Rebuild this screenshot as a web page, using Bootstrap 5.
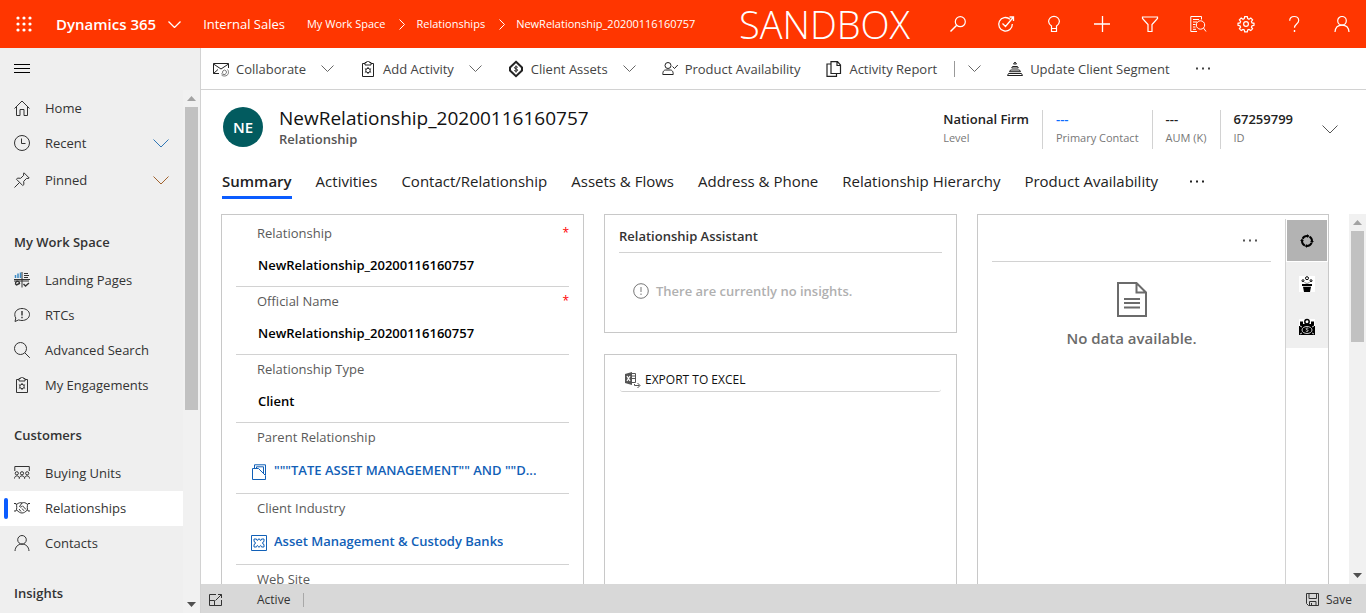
<!DOCTYPE html>
<html lang="en">
<head>
<meta charset="utf-8">
<meta name="viewport" content="width=device-width, initial-scale=1">
<title>NewRelationship_20200116160757 - Dynamics 365</title>
<link href="https://cdn.jsdelivr.net/npm/bootstrap@5.3.0/dist/css/bootstrap.min.css" rel="stylesheet">
<style>
  body { font-family: "Open Sans", "Noto Sans", sans-serif; font-size: 13px; line-height: 20px; color: #333; background: #fff; }
  button { background: none; border: 0; padding: 0; color: inherit; font: inherit; }
  a { color: inherit; text-decoration: none; }
  svg { display: block; flex: none; fill: none; overflow: visible; }
  svg:not([stroke]) { stroke: currentColor; }
  .i16 { width: 16px; height: 16px; }
  .chev { width: 13px; height: 7px; }
  .chev-lg { width: 16px; height: 9px; }

  /* top bar */
  .topbar { height: 48px; background: #ff3600; color: #fff; }
  .waffle { width: 48px; height: 48px; }
  .product { font-size: 15px; font-weight: 600; margin-left: 8px; gap: 12px; }
  .area { margin-left: 22px; }
  .crumbs { font-size: 11px; margin-left: 22px; }
  .crumbs .sep { padding: 0 11px 0 14px; }
  .env { font-size: 38px; line-height: 46px; font-weight: 300; }
  .topicon { width: 48px; height: 48px; }

  /* site map */
  .sitemap { width: 201px; background: #efefef; border-right: 1px solid #d2d2d2; }
  .burger { height: 42px; padding-left: 14px; }
  .map-items { width: 183px; padding-top: 1px; }
  .map-items a, .map-items .twisty { height: 35px; padding-left: 14px; gap: 15px; color: #333; width: 100%; }
  .map-items .twisty { padding-right: 14px; }
  .map-items .twisty + .twisty { margin-top: 2px; }
  .map-items a.current { background: #fff; position: relative; }
  .map-items a.current::before { content: ""; position: absolute; left: 4px; top: 7px; width: 4px; height: 21px; border-radius: 2px; background: #0b5cff; }
  .map-head { font-size: 13px; font-weight: 600; line-height: 20px; padding: 12px 0 11px 14px; margin: 10px 0 0; }
  .map-head.first { margin-top: 22px; }
  .tint-blue { color: #2f76b5; }
  .tint-brown { color: #a0622d; }
  .track { width: 17px; background: #f1f1f1; }
  .track svg { fill: #505050; stroke: none; width: 9px; height: 5px; }
  .track svg.dim { fill: #a3a3a3; }
  .thumb { width: 13px; background: #c1c1c1; }
  .arrow { height: 17px; }

  /* command bar */
  .commands { height: 42px; border-bottom: 1px solid #d2d2d2; padding-left: 12px; gap: 26px; color: #444; }
  .cmd { gap: 7px; }
  .cmd .chev { margin-left: 8px; color: #666; }
  .cmd .ico { color: #222; }
  .split { width: 1px; height: 16px; background: #999; margin: 0 5px 0 17px; }

  /* record header */
  .rec-head { padding: 17px 28px 0 22px; }
  .avatar { width: 40px; height: 40px; background: #025b5f; color: #fff; font-size: 15px; font-weight: 600; }
  .rec-title { font-size: 19px; line-height: 22px; font-weight: 500; color: #111; margin: 0; }
  .rec-sub { font-weight: 600; color: #555; }
  .rec-facts { padding-top: 2px; }
  .metric { padding: 0 13px; height: 39px; border-left: 1px solid #d2d2d2; }
  .metric:first-child { border-left: 0; }
  .metric dt { font-size: 11px; line-height: 19px; font-weight: 400; color: #777; }
  .metric dd { font-weight: 600; line-height: 18px; color: #222; margin: 0; }
  .metric dd a { color: #0b6cff; }
  .expand { color: #555; }
  .tabs { font-size: 15px; padding: 17px 0 0 21px; gap: 24px; color: #222; }
  .tabs a { height: 33px; padding-top: 5px; border-bottom: 3px solid transparent; white-space: nowrap; }
  .tabs a.current { font-weight: 600; border-bottom-color: #0b5cff; }
  .tabs button { margin: 14px 0 0 8px; }

  /* form body */
  .form-body { padding-top: 15px; }
  .form-grid { display: grid; grid-template-columns: 363fr 353fr 352fr; gap: 20px; padding: 0 20px; }
  .panel { border: 1px solid #c8c8c8; background: #fff; }
  .panel + .panel { margin-top: 21px; }
  .fields { padding: 4px 14px 0; }
  .field { border-bottom: 1px solid #d2d2d2; }
  .field label, .field .caption { display: block; padding: 4px 0 5px 21px; color: #5a5a5a; }
  .field .req { color: #f00; font-size: 12px; line-height: 12px; padding-top: 8px; }
  .field input, .field select { display: block; appearance: none; border: 0; outline: 0; background: none; width: 100%; height: 34px; padding: 0 0 0 22px; margin-bottom: 4px; font: inherit; font-weight: 600; color: #000; }
  .lookup { height: 36px; margin-bottom: 5px; padding: 0 14px 0 15px; gap: 7px; color: #1160b7; font-weight: 600; }
  .insight { padding: 11px 14px; height: 119px; }
  .panel-title { font-size: 13px; font-weight: 600; line-height: 20px; margin: 0; padding: 0 0 6px; border-bottom: 1px solid #d2d2d2; }
  .quiet { padding: 28px 0 0 14px; gap: 7px; color: #b0b0b0; font-weight: 600; }
  .export { font-size: 12px; color: #111; margin: 10px 15px 0; padding: 5px 0 1px 5px; border-bottom: 1px solid #d2d2d2; border-radius: 3px; }
  .export button { gap: 4px; }
  .empty-top { height: 47px; margin: 0 14px; border-bottom: 1px solid #d2d2d2; padding: 4px 14px 0 0; color: #555; }
  .empty { font-size: 15px; font-weight: 600; color: #6b6b6b; padding-top: 20px; gap: 11px; }
  .rail { width: 43px; margin-top: 4px; border-left: 1px solid #d2d2d2; }
  .rail button { height: 43px; background: #efefef; color: #000; }
  .rail button.current { background: #b3b3b3; height: 41px; margin: 1px; }

  /* status bar */
  .status { height: 29px; background: #d8d8d8; font-size: 12px; padding: 2px 14px 0 8px; color: #333; }
  .status .state { margin-left: 34px; }
  .status .save { gap: 7px; }
  .vr-line { width: 1px; height: 14px; background: #a8a8a8; margin-left: 13px; }
</style>
</head>
<body class="vh-100 overflow-hidden d-flex flex-column">

<svg width="0" height="0" class="position-absolute" aria-hidden="true">
  <symbol id="down" viewBox="0 0 13 7"><path d="M.5.5l6 6 6-6"/></symbol>
  <symbol id="downlg" viewBox="0 0 16 9"><path d="M.5.5L8 8l7.500-7.500"/></symbol>
  <symbol id="tri-up" viewBox="0 0 9 5"><path d="M4.500 0L9 5H0z"/></symbol>
  <symbol id="tri-down" viewBox="0 0 9 5"><path d="M0 0h9L4.500 5z"/></symbol>
  <symbol id="person" viewBox="0 0 16 16"><circle cx="8" cy="4.800" r="4.300"/><path d="M1 16c.3-4.300 3-6.900 7-6.900s6.700 2.600 7 6.900"/></symbol>
  <symbol id="clip" viewBox="0 0 16 16"><path d="M5 2.500H2.500v13h11v-13H11M5 1.500h1.500a1.500 1.500 0 0 1 3 0H11V4H5z"/><circle cx="8" cy="9.500" r="2.200"/><path d="M8 6v1.300M8 11.700V13M4.900 7.700l1.200.7M9.900 10.600l1.200.7M4.900 11.300l1.200-.7M9.900 8.400l1.200-.7"/></symbol>
  <symbol id="dots" viewBox="0 0 14 3"><path fill="currentColor" stroke="none" d="M0 .5h2v2H0zM6 .5h2v2H6zM12 .5h2v2h-2z"/></symbol>
</svg>

<header class="topbar d-flex align-items-center flex-shrink-0">
  <button class="waffle d-flex align-items-center justify-content-center" aria-label="App launcher">
    <svg class="i16" viewBox="0 0 16 16"><g fill="currentColor" stroke="none"><circle cx="2" cy="2" r="1.600"/><circle cx="8" cy="2" r="1.600"/><circle cx="14" cy="2" r="1.600"/><circle cx="2" cy="8" r="1.600"/><circle cx="8" cy="8" r="1.600"/><circle cx="14" cy="8" r="1.600"/><circle cx="2" cy="14" r="1.600"/><circle cx="8" cy="14" r="1.600"/><circle cx="14" cy="14" r="1.600"/></g></svg>
  </button>
  <button class="product d-flex align-items-center text-nowrap">Dynamics 365 <svg class="chev" stroke-width="1.300"><use href="#down"/></svg></button>
  <a href="#" class="area text-nowrap">Internal Sales</a>
  <nav aria-label="Breadcrumb">
    <ol class="crumbs list-unstyled d-flex align-items-center mb-0 text-nowrap">
      <li><a href="#">My Work Space</a></li>
      <li class="sep" aria-hidden="true"><svg width="6" height="11" viewBox="0 0 6 11"><path d="M.5.5l5 5-5 5"/></svg></li>
      <li><a href="#">Relationships</a></li>
      <li class="sep" aria-hidden="true"><svg width="6" height="11" viewBox="0 0 6 11"><path d="M.5.5l5 5-5 5"/></svg></li>
      <li><a href="#">NewRelationship_20200116160757</a></li>
    </ol>
  </nav>
  <div class="env ms-auto me-4">SANDBOX</div>
  <div class="d-flex">
    <button class="topicon d-flex align-items-center justify-content-center" aria-label="Search"><svg class="i16" viewBox="0 0 16 16" stroke-width="1.200"><circle cx="10.300" cy="5.700" r="5"/><path d="M6.700 9.300L.5 15.500" stroke-width="1.500"/></svg></button>
    <button class="topicon d-flex align-items-center justify-content-center" aria-label="Task flow"><svg class="i16" viewBox="0 0 16 16" stroke-width="1.300"><path d="M12 3.200A6.800 6.800 0 1 0 14.300 8M4.500 7.500l3 3L15.500 1M11.500 1h4v4"/></svg></button>
    <button class="topicon d-flex align-items-center justify-content-center" aria-label="Assistant"><svg class="i16" viewBox="0 0 16 16" stroke-width="1.200"><path d="M5.500 12.500V10C3.500 8.500 2.600 7.200 2.600 5.500a5.400 5.200 0 0 1 10.800 0c0 1.700-.9 3-2.900 4.500v2.500zM5.500 12.500v3h5v-3"/></svg></button>
    <button class="topicon d-flex align-items-center justify-content-center" aria-label="New"><svg class="i16" viewBox="0 0 16 16"><path d="M8.500 0v16M0 8h16" stroke-width="1.300"/></svg></button>
    <button class="topicon d-flex align-items-center justify-content-center" aria-label="Filter"><svg class="i16" viewBox="0 0 16 16" stroke-width="1.200"><path d="M.5 1h15v1.500L10 8.500v7H6v-7L.5 2.500z"/></svg></button>
    <button class="topicon d-flex align-items-center justify-content-center" aria-label="Advanced find"><svg class="i16" viewBox="0 0 16 16"><path d="M7 15.500H.8V.5h10.700v3M3 3.500h6M3 6h4M3 8.500h2.500M3 11h2.500M3 13.300h3"/><circle cx="10.500" cy="9" r="4.200"/><path d="M13.500 12l2.500 3.500"/></svg></button>
    <button class="topicon d-flex align-items-center justify-content-center" aria-label="Settings"><svg class="i16" viewBox="0 0 16 16" stroke-width="1.200"><circle cx="8" cy="8" r="2.400"/><path d="M6.700.6h2.600l.4 2 1.300.6 1.800-1.200 1.800 1.900L13.400 5.600l.6 1.300 2 .4v2l-2 .5-.6 1.300 1.200 1.700-1.800 1.800-1.800-1.200-1.300.6-.4 1.900H6.700l-.4-1.900-1.300-.6-1.800 1.200-1.800-1.800 1.200-1.700-.6-1.300-2-.5v-2l2-.4.6-1.300L1.400 3.900 3.200 2 5 3.200l1.300-.6z"/></svg></button>
    <button class="topicon d-flex align-items-center justify-content-center" aria-label="Help"><svg class="i16" viewBox="0 0 16 16"><path d="M3.700 4.800C3.700 2 5.500.5 8.200.5s4.500 1.500 4.500 4c0 3.500-4.200 3.500-4.200 7.200" stroke-width="1.200"/><path d="M8.500 14v2" stroke-width="1.400"/></svg></button>
    <button class="topicon d-flex align-items-center justify-content-center" aria-label="Account"><svg class="i16" viewBox="0 0 16 16" stroke-width="1.200"><use href="#person"/></svg></button>
  </div>
</header>

<div class="d-flex flex-grow-1 overflow-hidden">
  <aside class="sitemap d-flex flex-column flex-shrink-0">
    <button class="burger d-flex align-items-center" aria-label="Toggle site map"><svg width="16" height="9" viewBox="0 0 16 9" stroke="#000"><path d="M0 .5h16M0 4.500h16M0 8.500h16"/></svg></button>
    <div class="d-flex flex-grow-1 overflow-hidden">
      <nav class="map-items flex-shrink-0" aria-label="Site map">
        <a href="#" class="d-flex align-items-center"><svg class="i16" viewBox="0 0 16 16"><path d="M.5 8.500L8 1l7.500 7.500M2.500 7v8.500h3.500v-6h4v6h3.500V7"/></svg>Home</a>
        <button class="twisty d-flex align-items-center"><svg class="i16" viewBox="0 0 16 16"><circle cx="8" cy="8" r="7.500"/><path d="M7.500 3.500V8.500h4"/></svg>Recent<svg class="chev-lg ms-auto tint-blue"><use href="#downlg"/></svg></button>
        <button class="twisty d-flex align-items-center"><svg class="i16" viewBox="0 0 16 16"><path d="M10 .8L15.200 6l-1.200.5-1.300-.2-3 3 .2 3.200-1.200 1L2.500 7.300l1-1.200 3.200.2 3-3-.2-1.300zM5.500 10.500L.5 15.500"/></svg>Pinned<svg class="chev-lg ms-auto tint-brown"><use href="#downlg"/></svg></button>
        <h2 class="map-head first">My Work Space</h2>
        <a href="#" class="d-flex align-items-center"><svg class="i16" viewBox="0 0 16 16"><path d="M0 7.500h16M0 9h15M8 0v15.500"/><path stroke="#3b8ac4" stroke-width="1.500" d="M1.500 3v3M4 1.500V6M6.500.5V6"/><path d="M10 1.500h4M10 3.500h5M10 5.500h4"/><path d="M2.500 13a2 2 0 1 1 3-1.500zM9.500 12l2 2 3.500-3" stroke-width="1.400"/></svg>Landing Pages</a>
        <a href="#" class="d-flex align-items-center"><svg class="i16" viewBox="0 0 16 16"><path d="M1 14.500l.8-3.500A5.800 5.800 0 0 1 .8 7.500c0-3.500 3.200-6 7.200-6s7.500 2.500 7.500 6-3.500 6-7.500 6c-1.200 0-2.300-.2-3.300-.6z"/><path d="M8 4v4.500M8 9.800v1.500" stroke-width="1.400"/></svg>RTCs</a>
        <a href="#" class="d-flex align-items-center"><svg class="i16" viewBox="0 0 16 16"><circle cx="6.500" cy="6.500" r="6"/><path d="M10.800 10.800l5 5"/></svg>Advanced Search</a>
        <a href="#" class="d-flex align-items-center"><svg class="i16"><use href="#clip"/></svg>My Engagements</a>
        <h2 class="map-head">Customers</h2>
        <a href="#" class="d-flex align-items-center"><svg class="i16" viewBox="0 0 16 16"><path d="M.8 6V1.500h14.500V6"/><circle cx="2.800" cy="8.300" r="1.600"/><circle cx="8" cy="8.300" r="1.600"/><circle cx="13.200" cy="8.300" r="1.600"/><path d="M.5 13.500c0-3.500 4.800-3.500 4.800 0 0-3.500 5.300-3.500 5.300 0 0-3.500 4.900-3.500 4.900 0"/></svg>Buying Units</a>
        <a href="#" class="current d-flex align-items-center" aria-current="page"><svg class="i16" viewBox="0 0 16 16"><path d="M0 3.500h2c1 2.300 1 5.200 0 7.500H0M16 3.500h-2c-1 2.300-1 5.200 0 7.500h2M2.500 4.500C5 2.500 6.500 2.500 8 3c2-.8 3.500-.5 5.500 1.500M2.700 10c2 2 3.500 3 5.300 3s3.300-1 5.300-3M8 3L5.500 6.500c.8 1.200 2 .5 3-.7L12 9.500M8 8.500l2 2.300M5 9l2 2.500"/></svg>Relationships</a>
        <a href="#" class="d-flex align-items-center"><svg class="i16"><use href="#person"/></svg>Contacts</a>
        <h2 class="map-head">Insights</h2>
      </nav>
      <div class="track d-flex flex-column align-items-center" aria-hidden="true">
        <div class="arrow d-flex align-items-center"><svg class="dim"><use href="#tri-up"/></svg></div>
        <div class="thumb" style="height:58%"></div>
        <div class="arrow d-flex align-items-center mt-auto"><svg><use href="#tri-down"/></svg></div>
      </div>
    </div>
  </aside>

  <main class="d-flex flex-column flex-grow-1 overflow-hidden">
    <div class="commands d-flex align-items-center flex-shrink-0 text-nowrap" role="toolbar" aria-label="Commands">
      <button class="cmd d-flex align-items-center"><svg class="i16 ico" viewBox="0 0 16 16"><path d="M6 12.500H.5v-10h15V7M.5 3L8 8l7.500-5M.5 12.500L5 8.500"/><path stroke="#777" d="M10 12.500a2 2 0 1 1 3 0c-1 1.500-3 1.500-4.500 0M14.500 8.500c2 2.500 1 6.500-3 6.500-1.500 0-2.500-.5-3-1"/></svg>Collaborate<svg class="chev"><use href="#down"/></svg></button>
      <button class="cmd d-flex align-items-center"><svg class="i16 ico"><use href="#clip"/></svg>Add Activity<svg class="chev"><use href="#down"/></svg></button>
      <button class="cmd d-flex align-items-center"><svg class="i16 ico" viewBox="0 0 16 16"><path d="M8 .8L14 6.500v3L8 15.200 2 9.500v-3z" stroke-width="2"/><path d="M9.800 6.300c-1.200-.8-3.400-.6-3.400.5 0 1.300 3.300.9 3.300 2.300 0 1.200-2.300 1.300-3.500.4M8 4.500v7"/></svg>Client Assets<svg class="chev"><use href="#down"/></svg></button>
      <button class="cmd d-flex align-items-center"><svg class="i16 ico" viewBox="0 0 16 16"><circle cx="6" cy="4.500" r="3"/><path d="M.8 13.500C.8 10 2 9 4 9h4c2 0 3.200 1 3.200 4.500zM10.500 5.500l2 2L15.800 4"/></svg>Product Availability</button>
      <div class="d-flex align-items-center">
        <button class="cmd d-flex align-items-center"><svg class="i16 ico" viewBox="0 0 16 16" stroke-width="1.200"><path d="M5 .6h6.500L14.500 4v8.500H5zM11 .6V4.500h3.500M5 3H1v12.400h9.500v-2.900"/></svg>Activity Report</button>
        <span class="split"></span>
        <button class="cmd" aria-label="More report options"><svg class="chev"><use href="#down"/></svg></button>
      </div>
      <button class="cmd d-flex align-items-center"><svg class="i16 ico" viewBox="0 0 16 16"><path d="M8 1l1.500 2h-3zM5.500 5.500h5l.8 1.500H4.700zM3.500 9h9l1 1.700h-11zM1.500 12.500h13l1 2H.5z"/></svg>Update Client Segment</button>
      <button aria-label="More commands"><svg width="14" height="3"><use href="#dots"/></svg></button>
    </div>

    <div class="rec-head d-flex flex-shrink-0">
      <div class="avatar rounded-circle d-flex align-items-center justify-content-center">NE</div>
      <div class="ms-3">
        <h1 class="rec-title">NewRelationship_20200116160757</h1>
        <div class="rec-sub">Relationship</div>
      </div>
      <div class="rec-facts d-flex ms-auto align-items-center text-nowrap">
        <dl class="d-flex mb-0">
          <div class="metric d-flex flex-column-reverse justify-content-end"><dt>Level</dt><dd>National Firm</dd></div>
          <div class="metric d-flex flex-column-reverse justify-content-end"><dt>Primary Contact</dt><dd><a href="#">---</a></dd></div>
          <div class="metric d-flex flex-column-reverse justify-content-end"><dt>AUM (K)</dt><dd>---</dd></div>
          <div class="metric d-flex flex-column-reverse justify-content-end"><dt>ID</dt><dd>67259799</dd></div>
        </dl>
        <button class="expand ms-3" aria-label="Expand header"><svg class="chev-lg"><use href="#downlg"/></svg></button>
      </div>
    </div>

    <nav class="tabs d-flex align-items-start flex-shrink-0" aria-label="Form tabs">
      <a href="#" class="current" aria-current="page">Summary</a>
      <a href="#">Activities</a>
      <a href="#">Contact/Relationship</a>
      <a href="#">Assets &amp; Flows</a>
      <a href="#">Address &amp; Phone</a>
      <a href="#">Relationship Hierarchy</a>
      <a href="#">Product Availability</a>
      <button aria-label="More tabs"><svg width="14" height="3"><use href="#dots"/></svg></button>
    </nav>

    <div class="form-body d-flex flex-grow-1 overflow-hidden">
      <div class="form-grid flex-grow-1">
        <section class="panel fields">
          <div class="field"><div class="d-flex justify-content-between"><label for="rel">Relationship</label><span class="req">*</span></div><input id="rel" value="NewRelationship_20200116160757"></div>
          <div class="field"><div class="d-flex justify-content-between"><label for="off">Official Name</label><span class="req">*</span></div><input id="off" value="NewRelationship_20200116160757"></div>
          <div class="field"><label for="type">Relationship Type</label><select id="type"><option>Client</option></select></div>
          <div class="field"><span class="caption">Parent Relationship</span><a href="#" class="lookup d-flex align-items-center"><svg class="i16 mt-1" viewBox="0 0 16 16"><path d="M3.500 4V.8h11V11M5.500 4V2.800h7V10M1.500 15.500V4.500h6l7 7v4z"/></svg><span class="text-truncate">"""TATE ASSET MANAGEMENT"" AND ""D...</span></a></div>
          <div class="field"><span class="caption">Client Industry</span><a href="#" class="lookup d-flex align-items-center"><svg class="i16 mt-1" viewBox="0 0 16 16"><path d="M.5.500h15v15H.5z"/><path d="M3 4h2.500c0 2 1.800 2 1.800 0h1.400c0 2 1.800 2 1.800 0H13v2.500c-1.800 0-1.800 3 0 3V12h-2.500c0-2-1.800-2-1.800 0H7.300c0-2-1.800-2-1.800 0H3V9.500c1.800 0 1.800-3 0-3z"/></svg><span class="text-truncate">Asset Management &amp; Custody Banks</span></a></div>
          <div class="field"><label for="web">Web Site</label><input id="web" type="url"></div>
        </section>

        <div class="d-flex flex-column">
          <section class="panel insight">
            <h2 class="panel-title">Relationship Assistant</h2>
            <div class="quiet d-flex align-items-center"><svg class="i16" viewBox="0 0 16 16" stroke="#777"><circle cx="8" cy="8" r="7.300"/><path d="M8 4v5M8 10.500V12"/></svg>There are currently no insights.</div>
          </section>
          <section class="panel flex-grow-1">
            <div class="export d-flex"><button class="d-flex align-items-center"><svg class="i16" viewBox="0 0 16 16"><path fill="#555" stroke="none" d="M0 2l7-2v13L0 11z"/><path stroke="#555" d="M7 1.500h3.500v9H7M7 4h3.500M7 6.500h3.500M9.500 12v1.500h5M12.500 11l2.500 2.500-2.500 2.500"/><path stroke="#fff" stroke-width="1.200" d="M2 4l3 5M5 4L2 9"/></svg>EXPORT TO EXCEL</button></div>
          </section>
        </div>

        <section class="panel d-flex">
          <div class="flex-grow-1">
            <div class="empty-top d-flex align-items-center justify-content-end"><button aria-label="More options"><svg width="14" height="3"><use href="#dots"/></svg></button></div>
            <div class="empty d-flex flex-column align-items-center"><svg width="30" height="35" viewBox="0 0 30 35" stroke-width="2"><path d="M1 1h18.500L29 10.500V34H1zM19.500 1v9.500H29M7 17h16M7 21h16M7 25.500h16"/></svg>No data available.</div>
          </div>
          <div class="rail d-flex flex-column">
            <button class="current d-flex align-items-center justify-content-center" aria-label="Cycle"><svg class="i16" viewBox="0 0 16 16" stroke-width="2"><circle cx="8" cy="8" r="5" stroke-dasharray="7 .85" stroke-dashoffset="-2"/><path stroke="none" fill="currentColor" d="M8 1l2 2-2 2zM15 8l-2 2-2-2zM8 15l-2-2 2-2zM1 8l2-2 2 2z"/></svg></button>
            <button class="d-flex align-items-center justify-content-center" aria-label="Growth"><svg class="i16 bg-white" viewBox="0 0 16 16"><path fill="currentColor" stroke="none" d="M3 8h10v2H3zM4 10.700h8l-1 5.300H5z"/><circle cx="8" cy="2.200" r="1.500"/><circle cx="4" cy="4.700" r="1"/><circle cx="12" cy="4.700" r="1"/><path stroke="#888" d="M5.500 6.500L8 7.500l2.500-1"/></svg></button>
            <button class="d-flex align-items-center justify-content-center" aria-label="Cash"><svg class="i16 bg-white" viewBox="0 0 16 16"><path fill="currentColor" stroke="none" d="M1 5h14v2h1v9H0V7h1zM1 2.500h3V5H1zM12 2.500h3V5h-3z"/><circle cx="8" cy="2.800" r="2.200" stroke-width="1.500"/><g stroke="#fff" stroke-width=".8"><ellipse cx="8" cy="11" rx="5" ry="3.500"/><path d="M9.300 9.500c-1-.8-2.500-.3-2.200.6.300.8 1.900.6 2 1.500.1.900-1.400 1.200-2.300.4M1 7l2 1M15 7l-2 1M1 15l2-1M15 15l-2-1"/></g></svg></button>
          </div>
        </section>
      </div>
      <div class="track d-flex flex-column align-items-center flex-shrink-0" aria-hidden="true">
        <div class="arrow d-flex align-items-center"><svg class="dim"><use href="#tri-up"/></svg></div>
        <div class="thumb" style="height:30%"></div>
        <div class="arrow d-flex align-items-center mt-auto"><svg><use href="#tri-down"/></svg></div>
      </div>
    </div>

    <footer class="status d-flex align-items-center flex-shrink-0">
      <button aria-label="Pop out"><svg width="14" height="12" viewBox="0 0 14 12"><path d="M7 .5H.5v11h12V6M.5 6.500h5v5M6.500 6.500l6-6M9 .5h3.500V4"/></svg></button>
      <span class="state">Active</span>
      <span class="vr-line"></span>
      <button class="save d-flex align-items-center ms-auto"><svg width="13" height="13" viewBox="0 0 13 13"><path d="M.5.500h12v12H2.500l-2-2zM3 .5v5h7.500v-5M3.500 12.500v-4h6.500v4M5.500 10v2.500"/></svg>Save</button>
    </footer>
  </main>
</div>

<script src="https://cdn.jsdelivr.net/npm/bootstrap@5.3.0/dist/js/bootstrap.bundle.min.js"></script>
</body>
</html>
